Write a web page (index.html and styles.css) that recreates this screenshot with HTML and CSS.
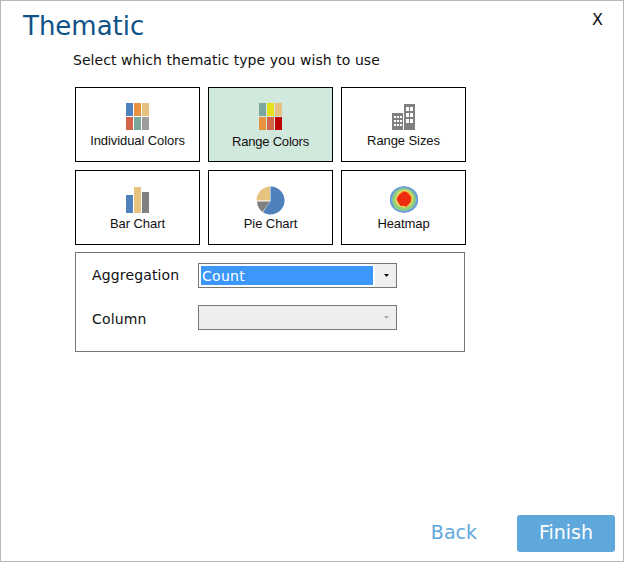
FILE: index.html
```html
<!DOCTYPE html>
<html lang="en">
<head>
<meta charset="utf-8">
<title>Thematic</title>
<link rel="stylesheet" href="styles.css">
</head>
<body>
<div class="dialog">
  <div class="close">X</div>
  <h1 class="title">Thematic</h1>
  <p class="prompt">Select which thematic type you wish to use</p>
  <div class="tiles">
    <div class="tile">
      <div class="icon-box">
        <svg class="icon" width="23" height="27" viewBox="0 0 23 27">
          <rect x="0" y="0" width="7" height="13" fill="#4f81bd"/><rect x="8" y="0" width="7" height="13" fill="#e8923f"/><rect x="16" y="0" width="7" height="13" fill="#e6c07f"/>
          <rect x="0" y="14" width="7" height="13" fill="#d2644a"/><rect x="8" y="14" width="7" height="13" fill="#7ba89a"/><rect x="16" y="14" width="7" height="13" fill="#9c9c9c"/>
        </svg>
      </div>
      <span class="tile-label">Individual Colors</span>
    </div>
    <div class="tile tile-active">
      <div class="icon-box">
        <svg class="icon" width="23" height="27" viewBox="0 0 23 27">
          <rect x="0" y="0" width="7" height="13" fill="#7ba89a"/><rect x="8" y="0" width="7" height="13" fill="#e6e01a"/><rect x="16" y="0" width="7" height="13" fill="#e6c07f"/>
          <rect x="0" y="14" width="7" height="13" fill="#e8923f"/><rect x="8" y="14" width="7" height="13" fill="#d2644a"/><rect x="16" y="14" width="7" height="13" fill="#c00000"/>
        </svg>
      </div>
      <span class="tile-label">Range Colors</span>
    </div>
    <div class="tile">
      <div class="icon-box">
        <svg class="icon icon-inset" width="23" height="26" viewBox="0 0 23 26">
          <path fill="#808080" fill-rule="evenodd" d="M0 9h11v17H0zM2 12v2h2v-2zM5 12v2h2v-2zM8 12v2h2v-2zM2 16v2h2v-2zM5 16v2h2v-2zM8 16v2h2v-2zM2 20v2h2v-2zM5 20v2h2v-2zM8 20v2h2v-2z"/>
          <path fill="#808080" fill-rule="evenodd" d="M12 0h11v26H12zM14 3v4h3V3zM18 3v4h3V3zM14 9v4h3V9zM18 9v4h3V9zM14 15v4h3v-4zM18 15v4h3v-4z"/>
        </svg>
      </div>
      <span class="tile-label">Range Sizes</span>
    </div>
    <div class="tile">
      <div class="icon-box">
        <svg class="icon icon-inset" width="23" height="26" viewBox="0 0 23 26">
          <rect x="0" y="8" width="7" height="18" fill="#4f81bd"/><rect x="8" y="0" width="7" height="26" fill="#e6c47f"/><rect x="16" y="5" width="7" height="21" fill="#808080"/>
        </svg>
      </div>
      <span class="tile-label">Bar Chart</span>
    </div>
    <div class="tile">
      <div class="icon-box">
        <svg class="icon" width="29" height="29" viewBox="0 0 29 29">
          <path fill="#4f81bd" d="M14.5.5a14 14 0 1 1-7.500 25.800L14.500 15z"/>
          <path fill="#808080" d="M14 15.500L6.500 26A14 14 0 0 1 1 15.500z"/>
          <path fill="#e6c47f" d="M14 14.500H.5A14 14 0 0 1 14 .5z"/>
        </svg>
      </div>
      <span class="tile-label">Pie Chart</span>
    </div>
    <div class="tile">
      <div class="icon-box">
        <svg class="icon" width="28" height="27" viewBox="0 0 28 27">
          <path fill="#6f9fd8" d="M14 0l5 1 4 2 3 3 2 4v7l-2 4-3 3-4 2-5 1-5-1-4-2-3-3-2-4v-7l2-4 3-3 4-2z"/>
          <path fill="#8fcf7a" d="M13 2l6 1 3 2 3 4 1 5-1 4-3 4-4 2-5 1-4-1-4-2-2-4-1-4 1-5 3-4 3-2z"/>
          <path fill="#dfd86a" d="M13 4l5 0 3 3 2 3 0 5-2 4-3 2-4 1-4-1-4-3-1-4 1-4 2-4 2-1z"/>
          <path fill="#f09020" d="M13 5l5 1 2 2 2 4-1 4-2 3-3 2-4-1-3-2-2-4 1-4 2-3z"/>
          <path fill="#ee2a10" d="M14 5.500l3 1 2 2 2 3-.5 4.500-2 2-2 2.500-3-1-3 .5-2.500-4-1.500-3 2-3.500 2.500-2z"/>
        </svg>
      </div>
      <span class="tile-label">Heatmap</span>
    </div>
  </div>
  <div class="panel">
    <div class="field">
      <span class="field-label field-label-high">Aggregation</span>
      <div class="select">
        <span class="select-value">Count</span>
        <span class="select-arrow"><svg width="5" height="3" viewBox="0 0 5 3"><path d="M0 0h5L2.500 3z" fill="#111"/></svg></span>
      </div>
    </div>
    <div class="field">
      <span class="field-label field-label-low">Column</span>
      <div class="select select-disabled">
        <span class="select-value"></span>
        <span class="select-arrow"><svg width="5" height="3" viewBox="0 0 5 3"><path d="M0 0h5L2.500 3z" fill="#aaa"/></svg></span>
      </div>
    </div>
  </div>
  <div class="footer">
    <span class="back">Back</span>
    <span class="finish">Finish</span>
  </div>
</div>
</body>
</html>
```
FILE: styles.css
```css
* { box-sizing: border-box; }
html, body { margin: 0; padding: 0; background: #fff; }
body { font-family: "DejaVu Sans", sans-serif; color: #111; }
.dialog {
  position: relative;
  width: 624px;
  height: 562px;
  border: 1px solid #b9b9b9;
  display: flex;
  flex-direction: column;
  overflow: hidden;
}
.close {
  position: absolute;
  top: 10px;
  right: 20px;
  font: 16px/18px "DejaVu Sans", sans-serif;
}
.title {
  margin: 9px 0 0 22px;
  font-size: 26px;
  line-height: 33px;
  font-weight: 400;
  color: #0f5287;
}
.prompt {
  margin: 9px 0 0 72px;
  font-size: 14px;
  line-height: 17px;
  letter-spacing: 0.05px;
}
.tiles {
  margin: 18px 0 0 74px;
  display: grid;
  grid-template-columns: repeat(3, 125px);
  grid-auto-rows: 75px;
  gap: 8px;
}
.tile {
  border: 1px solid #000;
  background: #fff;
  display: flex;
  flex-direction: column;
  align-items: center;
  padding-top: 15px;
  font: 13px/15px "Liberation Sans", Arial, sans-serif;
  letter-spacing: -0.08px;
}
.tile-active { background: #d1e9dc; }
.icon-box { height: 29px; flex: none; }
.icon { display: block; }
.icon-inset { margin-top: 1px; }
.tile-label { margin-top: 1px; }
.tile-active .tile-label { margin-top: 2px; letter-spacing: -0.2px; }
.panel {
  margin: 7px 0 0 74px;
  width: 390px;
  height: 100px;
  border: 1px solid #777;
  padding: 10px 0 0 16px;
  display: flex;
  flex-direction: column;
  gap: 17px;
}
.field { display: flex; align-items: center; font-size: 14px; letter-spacing: 0.15px; }
.field-label { width: 106px; }
.field-label-high { margin-bottom: 2px; }
.field-label-low { margin-top: 2px; }
.select {
  width: 199px;
  height: 25px;
  border: 1px solid #777;
  padding: 2px;
  display: flex;
  background: #fff;
}
.select-value {
  flex: 1;
  margin-right: 2px;
  background: #3b97fb;
  color: #fff;
  line-height: 20px;
  padding-left: 1px;
  letter-spacing: 0.3px;
}
.select-arrow {
  width: 21px;
  margin: -2px -2px -2px 0;
  padding-left: 2px;
  background: #f0f0f0;
  display: flex;
  align-items: center;
  justify-content: center;
}
.select-disabled { background: #eee; }
.select-disabled .select-value { background: transparent; }
.select-disabled .select-arrow { background: #eee; padding-left: 1px; }
.footer {
  margin-top: auto;
  padding: 0 8px 9px 0;
  display: flex;
  align-items: center;
  justify-content: flex-end;
  font-size: 19px;
}
.back { color: #5fa8dc; margin-right: 40px; padding-bottom: 3px; }
.finish {
  width: 98px;
  height: 37px;
  padding-bottom: 3px;
  background: #5fa8dc;
  color: #fff;
  border-radius: 3px;
  display: flex;
  align-items: center;
  justify-content: center;
}
```
